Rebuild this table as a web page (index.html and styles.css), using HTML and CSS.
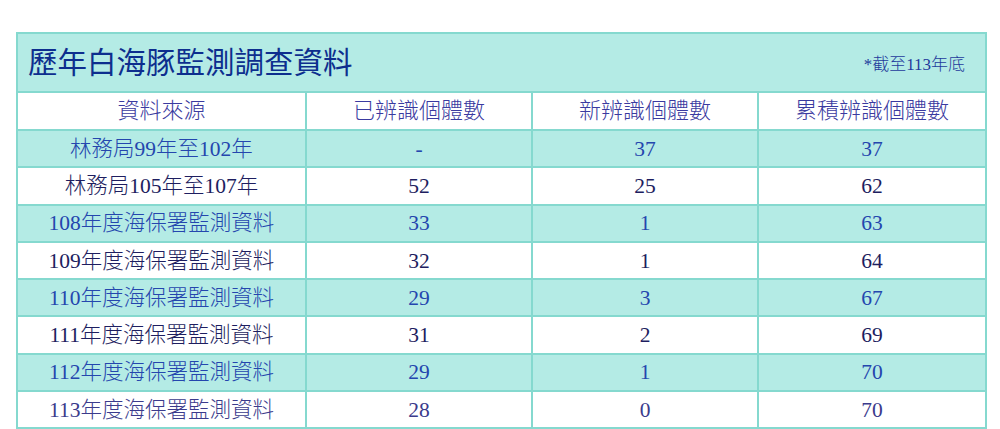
FILE: index.html
```html
<!DOCTYPE html>
<html lang="zh-Hant">
<head>
<meta charset="utf-8">
<link rel="stylesheet" href="styles.css">
</head>
<body>
<div class="page">
<table class="data">
  <colgroup>
    <col class="c1"><col class="c2"><col class="c3"><col class="c4">
  </colgroup>
  <tr class="title-row">
    <td colspan="4">
      <div class="title-wrap">
        <span class="title">歷年白海豚監測調查資料</span>
        <span class="note">*截至113年底</span>
      </div>
    </td>
  </tr>
  <tr class="head">
    <td>資料來源</td><td>已辨識個體數</td><td>新辨識個體數</td><td>累積辨識個體數</td>
  </tr>
  <tr class="teal"><td>林務局99年至102年</td><td>-</td><td>37</td><td>37</td></tr>
  <tr class="white"><td>林務局105年至107年</td><td>52</td><td>25</td><td>62</td></tr>
  <tr class="teal"><td>108年度海保署監測資料</td><td>33</td><td>1</td><td>63</td></tr>
  <tr class="white"><td>109年度海保署監測資料</td><td>32</td><td>1</td><td>64</td></tr>
  <tr class="teal"><td>110年度海保署監測資料</td><td>29</td><td>3</td><td>67</td></tr>
  <tr class="white"><td>111年度海保署監測資料</td><td>31</td><td>2</td><td>69</td></tr>
  <tr class="teal"><td>112年度海保署監測資料</td><td>29</td><td>1</td><td>70</td></tr>
  <tr class="white last"><td>113年度海保署監測資料</td><td>28</td><td>0</td><td>70</td></tr>
</table>
</div>
</body>
</html>
```

FILE: styles.css
```css
html, body {
  margin: 0;
  padding: 0;
  background: #ffffff;
}
.page {
  padding: 32px 0 0 16px;
  font-family: "Liberation Serif", "Noto Sans CJK TC", serif;
}
.data {
  border-collapse: collapse;
  width: 969px;
  table-layout: fixed;
}
.c1 { width: 289px; }
.c2 { width: 226px; }
.c3 { width: 226px; }
.c4 { width: 228px; }
.data td {
  border: 2px solid #85d9cf;
  text-align: center;
  padding: 0;
  height: 35.3px;
  font-size: 21.5px;
  line-height: 24px;
  font-weight: 300;
}
.title-row td {
  background: #b4ebe5;
  height: 57px;
  text-align: left;
}
.title-wrap {
  display: flex;
  justify-content: space-between;
  align-items: center;
  padding: 0 20px 0 10px;
}
.title {
  font-size: 29.5px;
  line-height: 34px;
  color: #0d2e8e;
  font-weight: 400;
}
.note {
  font-size: 17px;
  color: #1f3a9c;
  position: relative;
  top: 2px;
}
.head td {
  background: #ffffff;
  color: #3a3aa0;
  height: 36px;
  font-size: 22px;
}
.teal td {
  background: #b4ebe5;
  color: #2446ae;
}
.white td {
  background: #ffffff;
  color: #1e1e60;
}
.last td {
  color: #3b3b8c;
}
```
